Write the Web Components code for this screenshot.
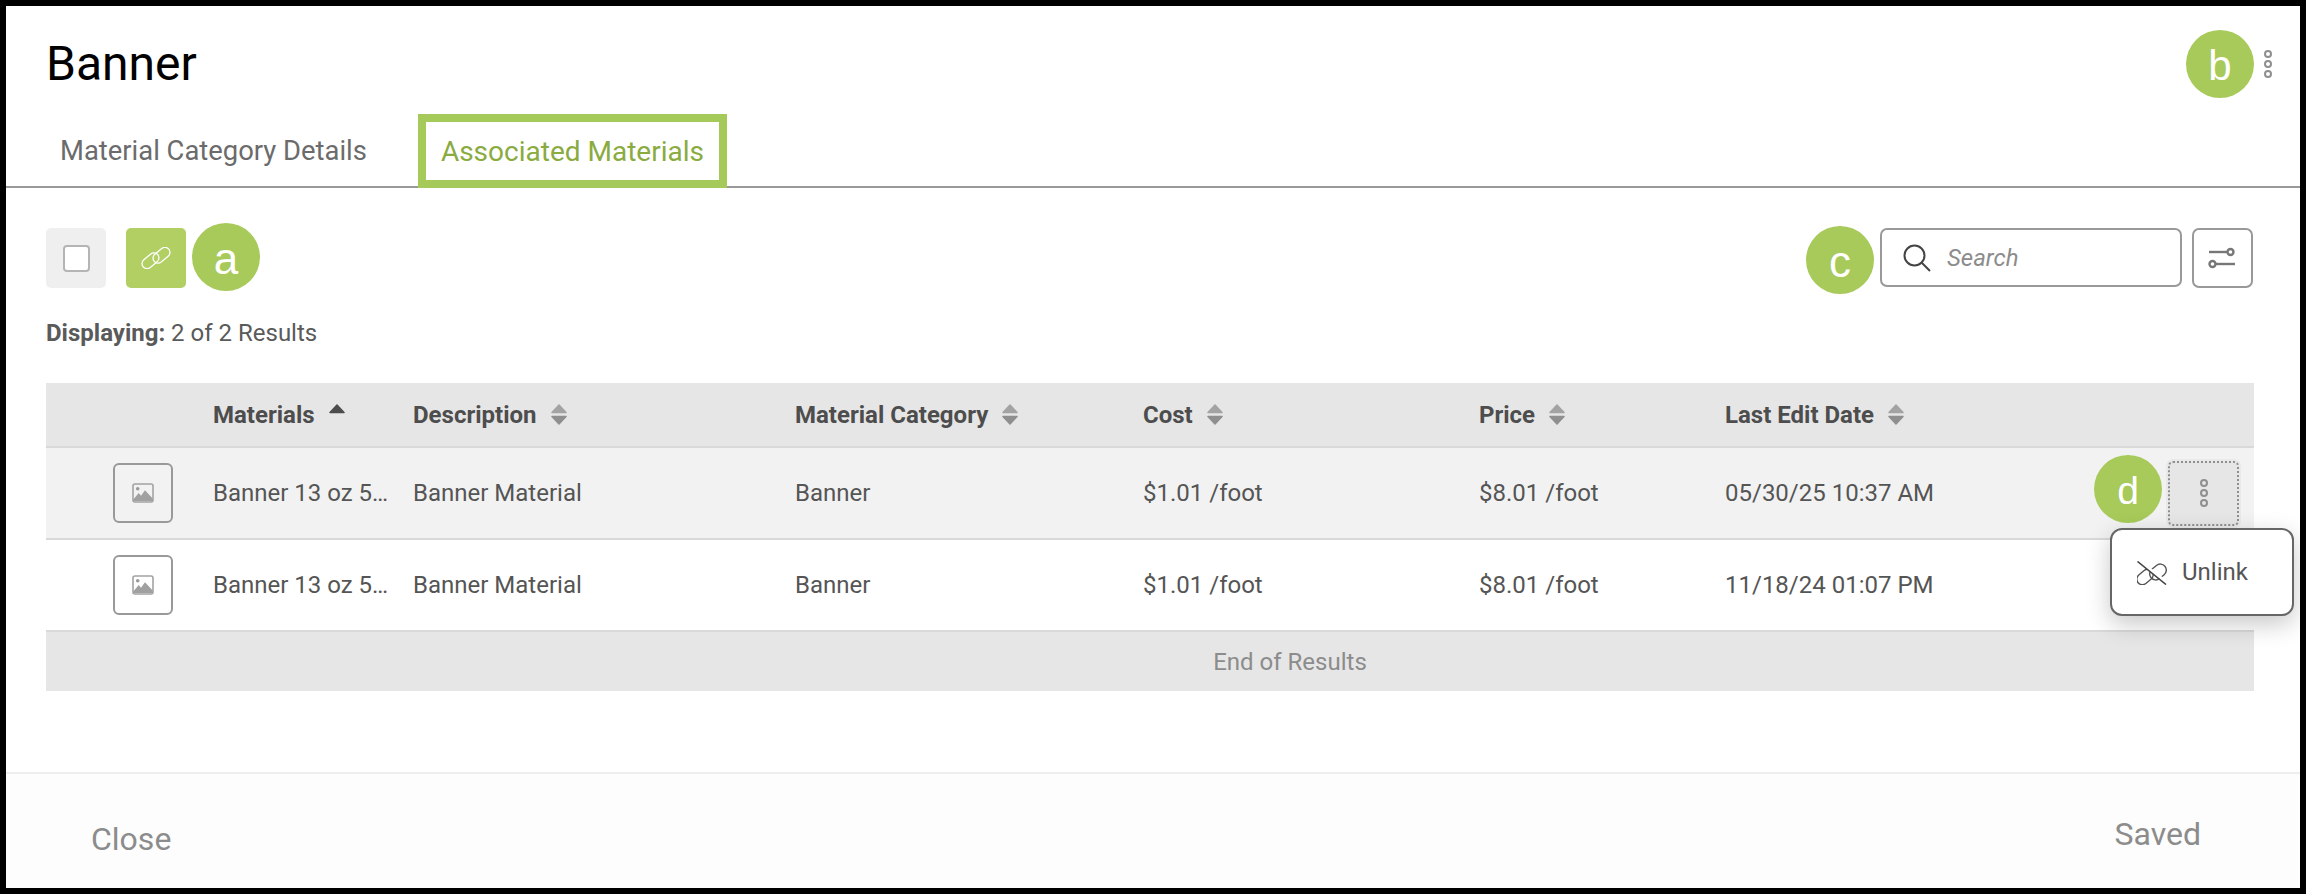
<!DOCTYPE html>
<html>
<head>
<meta charset="utf-8">
<title>Banner</title>
<style>
    html, body { margin: 0; padding: 0; background: #000; }
    body { font-family: Roboto, "Liberation Sans", sans-serif; }
</style>
</head>
<body>
<modal-frame>
    <modal-header slot="header" title-text="Banner"></modal-header>
    <tab-bar slot="header">
        <tab-item>Material Category Details</tab-item>
        <tab-item active>Associated Materials</tab-item>
    </tab-bar>

    <list-toolbar></list-toolbar>
    <results-count shown="2" total="2"></results-count>

    <materials-table>
        <table-row kind="head">
            <span></span>
            <sort-head state="asc">Materials</sort-head>
            <sort-head>Description</sort-head>
            <sort-head>Material Category</sort-head>
            <sort-head>Cost</sort-head>
            <sort-head>Price</sort-head>
            <sort-head>Last Edit Date</sort-head>
            <span></span>
        </table-row>
        <table-row kind="hover">
            <thumb-box></thumb-box>
            <span>Banner 13 oz 5…</span>
            <span>Banner Material</span>
            <span>Banner</span>
            <span>$1.01 /foot</span>
            <span>$8.01 /foot</span>
            <span>05/30/25 10:37 AM</span>
            <row-actions></row-actions>
        </table-row>
        <table-row>
            <thumb-box></thumb-box>
            <span>Banner 13 oz 5…</span>
            <span>Banner Material</span>
            <span>Banner</span>
            <span>$1.01 /foot</span>
            <span>$8.01 /foot</span>
            <span>11/18/24 01:07 PM</span>
            <span></span>
        </table-row>
        <table-end>End of Results</table-end>
    </materials-table>

    <modal-footer slot="footer"></modal-footer>

    <note-badge slot="notes" letter="a" style="--x:186px;--y:217px;--size:44px"></note-badge>
    <note-badge slot="notes" letter="b" style="--x:2180px;--y:24px;--size:42px"></note-badge>
    <note-badge slot="notes" letter="c" style="--x:1800px;--y:220px;--size:44px"></note-badge>
    <note-badge slot="notes" letter="d" style="--x:2088px;--y:449px;--size:39px"></note-badge>
    <row-menu slot="notes" style="--x:2104px;--y:522px"></row-menu>
</modal-frame>

<script>
const KEBAB = `<svg width="10" height="28" viewBox="0 0 10 28" fill="none" stroke="#8f8f8f" stroke-width="2">
    <circle cx="5" cy="4" r="3"/><circle cx="5" cy="14" r="3"/><circle cx="5" cy="24" r="3"/></svg>`

function define(name, html, init) {
    const template = document.createElement('template')
    template.innerHTML = html
    customElements.define(name, class extends HTMLElement {
        constructor() {
            super()
            this.attachShadow({ mode: "open" })
            this.shadowRoot.appendChild(template.content.cloneNode(true))
        }
        connectedCallback() {
            if (init) init(this, this.shadowRoot)
        }
    })
}

define("modal-frame", `
<style>
    :host {
        display: flex;
        flex-direction: column;
        position: relative;
        box-sizing: border-box;
        width: 2306px;
        height: 894px;
        border: 6px solid #000;
        background: #fff;
        overflow: hidden;
    }
    main {
        flex: 1;
        padding: 40px 46px 0 40px;
    }
</style>
<slot name="header"></slot>
<main><slot></slot></main>
<slot name="footer"></slot>
<slot name="notes"></slot>
`)

define("modal-header", `
<style>
    :host {
        display: flex;
        align-items: flex-start;
        justify-content: space-between;
        height: 108px;
        padding: 0 27px 0 40px;
    }
    h1 {
        margin: 30px 0 0;
        font: 400 48px/56px Roboto, sans-serif;
        color: #000;
    }
    svg { margin-top: 44px; }
</style>
<h1></h1>
${KEBAB}
`, (el, root) => {
    root.querySelector("h1").textContent = el.getAttribute("title-text")
})

define("tab-bar", `
<style>
    :host {
        display: flex;
        height: 74px;
        box-sizing: border-box;
        border-bottom: 2px solid #999;
        padding-left: 31px;
        gap: 28px;
    }
</style>
<slot></slot>
`)

define("tab-item", `
<style>
    :host {
        display: flex;
        align-items: center;
        box-sizing: border-box;
        height: 74px;
        padding: 0 15px;
        font-size: 27.4px;
        color: #6b6b6b;
        border: 8px solid transparent;
    }
    :host([active]) {
        border-color: #a6ca5a;
        color: #8aab3f;
        background: #fff;
        font-size: 28px;
    }
</style>
<slot></slot>
`)

define("list-toolbar", `
<style>
    :host {
        display: flex;
        align-items: flex-start;
        height: 60px;
        margin-right: 1px;
    }
    .check, .link {
        display: flex;
        align-items: center;
        justify-content: center;
        width: 60px;
        height: 60px;
        border-radius: 5px;
        box-sizing: border-box;
    }
    .check { background: #efefef; margin-right: 20px; }
    .check i {
        box-sizing: border-box;
        width: 27px;
        height: 27px;
        background: #fff;
        border: 2px solid #b4b4b4;
        border-radius: 4px;
    }
    .link { background: #b1cf63; }
    .search {
        display: flex;
        align-items: center;
        box-sizing: border-box;
        width: 302px;
        height: 59px;
        margin-left: auto;
        padding-left: 21px;
        border: 2px solid #999;
        border-radius: 7px;
    }
    .search span {
        margin-left: 16px;
        font-size: 24px;
        font-style: italic;
        color: #8c8c8c;
    }
    .filter {
        display: flex;
        align-items: center;
        justify-content: center;
        box-sizing: border-box;
        width: 61px;
        height: 60px;
        margin-left: 10px;
        border: 2px solid #999;
        border-radius: 7px;
    }
</style>
<div class="check"><i></i></div>
<div class="link">
    <svg width="30" height="22" viewBox="0 0 30 22" fill="none" stroke="#fff" stroke-width="1.3">
        <rect x="0" y="8.75" width="19" height="10" rx="5" transform="rotate(-40 9.5 13.75)"/>
        <rect x="11" y="3.25" width="19" height="10" rx="5" transform="rotate(-40 20.5 8.25)"/>
    </svg>
</div>
<div class="search">
    <svg width="28" height="28" viewBox="0 0 28 28" fill="none" stroke="#444" stroke-width="2">
        <circle cx="11.5" cy="11.5" r="10"/><path d="M18.5 18.5 L27 27"/>
    </svg>
    <span>Search</span>
</div>
<div class="filter">
    <svg width="30" height="22" viewBox="0 0 30 22" fill="none" stroke="#777" stroke-width="2.4">
        <path d="M1 5 H19"/><circle cx="22.5" cy="5" r="3"/>
        <path d="M8 17 H27"/><circle cx="4.5" cy="17" r="3"/>
    </svg>
</div>
`)

define("results-count", `
<style>
    :host {
        display: block;
        margin-top: 31px;
        font-size: 24px;
        line-height: 28px;
        color: #5a5a5a;
    }
    b { font-weight: 700; }
</style>
<b>Displaying:</b> <span></span>
`, (el, root) => {
    root.querySelector("span").textContent =
        `${el.getAttribute("shown")} of ${el.getAttribute("total")} Results`
})

define("materials-table", `
<style>
    :host {
        display: block;
        margin-top: 36px;
        --cols: 167px 200px 382px 348px 336px 246px 250px 1fr;
    }
</style>
<slot></slot>
`)

define("table-row", `
<style>
    :host {
        display: grid;
        grid-template-columns: var(--cols);
        align-items: center;
        box-sizing: border-box;
        height: 92px;
        border-bottom: 2px solid #d9d9d9;
        background: #fff;
        font-size: 24px;
        color: #555;
    }
    :host([kind="head"]) { height: 65px; background: #e6e6e6; }
    :host([kind="hover"]) { background: #f2f2f2; }
</style>
<slot></slot>
`)

define("sort-head", `
<style>
    :host {
        display: flex;
        align-items: center;
        gap: 14px;
        font-weight: 700;
        font-size: 24px;
        color: #4d4d4d;
    }
    svg { display: block; }
</style>
<slot></slot>
<svg width="16" height="21" viewBox="0 0 16 21" stroke-linejoin="round" stroke-width="1.5">
    <path class="up" d="M8 1 L15 8.5 H1 Z"/>
    <path class="down" d="M1 12.5 H15 L8 20 Z"/>
</svg>
`, (el, root) => {
    const up = root.querySelector(".up")
    const down = root.querySelector(".down")
    if (el.getAttribute("state") === "asc") {
        up.setAttribute("fill", "#4d4d4d")
        up.setAttribute("stroke", "#4d4d4d")
        down.remove()
    } else {
        up.setAttribute("fill", "#a3a3a3")
        up.setAttribute("stroke", "#a3a3a3")
        down.setAttribute("fill", "#8f8f8f")
        down.setAttribute("stroke", "#8f8f8f")
    }
})

define("thumb-box", `
<style>
    :host {
        display: flex;
        align-items: center;
        justify-content: center;
        box-sizing: border-box;
        width: 60px;
        height: 60px;
        margin-left: 67px;
        border: 2px solid #999;
        border-radius: 6px;
    }
</style>
<svg width="22" height="20" viewBox="0 0 22 20">
    <rect x="1" y="1" width="20" height="18" rx="2" fill="none" stroke="#a3a3a3" stroke-width="1.6"/>
    <circle cx="5.7" cy="5.7" r="1.8" fill="#9a9a9a"/>
    <path d="M1.3 18 V16.5 L6.7 10 L9 12.7 L13 7.3 L20.7 15.5 V18 Z" fill="#a0a0a0"/>
</svg>
`)

define("row-actions", `
<style>
    :host {
        display: flex;
        justify-content: flex-end;
        padding-right: 15px;
    }
    div {
        display: flex;
        align-items: center;
        justify-content: center;
        box-sizing: border-box;
        width: 71px;
        height: 65px;
        border: 2px dotted #8f8f8f;
        border-radius: 5px;
        background: #e6e6e6;
        box-shadow: 0 0 0 2px #e9e9e9;
    }
</style>
<div>${KEBAB}</div>
`)

define("table-end", `
<style>
    :host {
        display: flex;
        align-items: center;
        justify-content: center;
        box-sizing: border-box;
        height: 59px;
        padding-left: 280px;
        background: #e6e6e6;
        font-size: 24px;
        color: #8c8c8c;
    }
</style>
<slot></slot>
`)

define("modal-footer", `
<style>
    :host {
        display: flex;
        justify-content: space-between;
        box-sizing: border-box;
        height: 116px;
        padding: 0 99px 0 85px;
        border-top: 2px solid #eee;
        background: #fdfdfd;
        font-size: 32px;
        line-height: 36px;
        color: #8c8c8c;
    }
    .close { margin-top: 47px; }
    .save { margin-top: 42px; }
</style>
<span class="close">Close</span>
<span class="save">Saved</span>
`)

// a..d callouts sit on top of the screen, so they get a free position
define("note-badge", `
<style>
    :host {
        position: absolute;
        left: var(--x);
        top: var(--y);
        display: flex;
        align-items: center;
        justify-content: center;
        box-sizing: border-box;
        width: 68px;
        height: 68px;
        padding-top: 3px;
        border-radius: 50%;
        background: #a7ca5a;
        font: 400 var(--size)/1 "Liberation Sans", Arial, sans-serif;
        color: #fff;
    }
</style>
<span></span>
`, (el, root) => {
    root.querySelector("span").textContent = el.getAttribute("letter")
})

define("row-menu", `
<style>
    :host {
        position: absolute;
        left: var(--x);
        top: var(--y);
        display: flex;
        align-items: center;
        gap: 15px;
        box-sizing: border-box;
        width: 184px;
        height: 88px;
        padding-left: 25px;
        border: 2px solid #666;
        border-radius: 12px;
        background: #fff;
        box-shadow: 0 8px 24px rgba(0, 0, 0, .22);
        font-size: 24px;
        color: #555;
    }
    svg { display: block; margin-top: 1px; }
</style>
<svg width="30" height="24" viewBox="0 0 30 24" fill="none" stroke="#555" stroke-width="1.4">
    <rect x="-1" y="10.5" width="18" height="11" rx="5.5" transform="rotate(-40 8 16)"/>
    <rect x="12" y="5" width="18" height="12" rx="6" transform="rotate(-40 21 11)"/>
    <path d="M1.5 -0.5 L30 21.5" stroke="#fff" stroke-width="3"/>
    <path d="M0.5 0.5 L29 23.5" stroke="#444" stroke-width="1.6"/>
</svg>
<span>Unlink</span>
`)
</script>
</body>
</html>
